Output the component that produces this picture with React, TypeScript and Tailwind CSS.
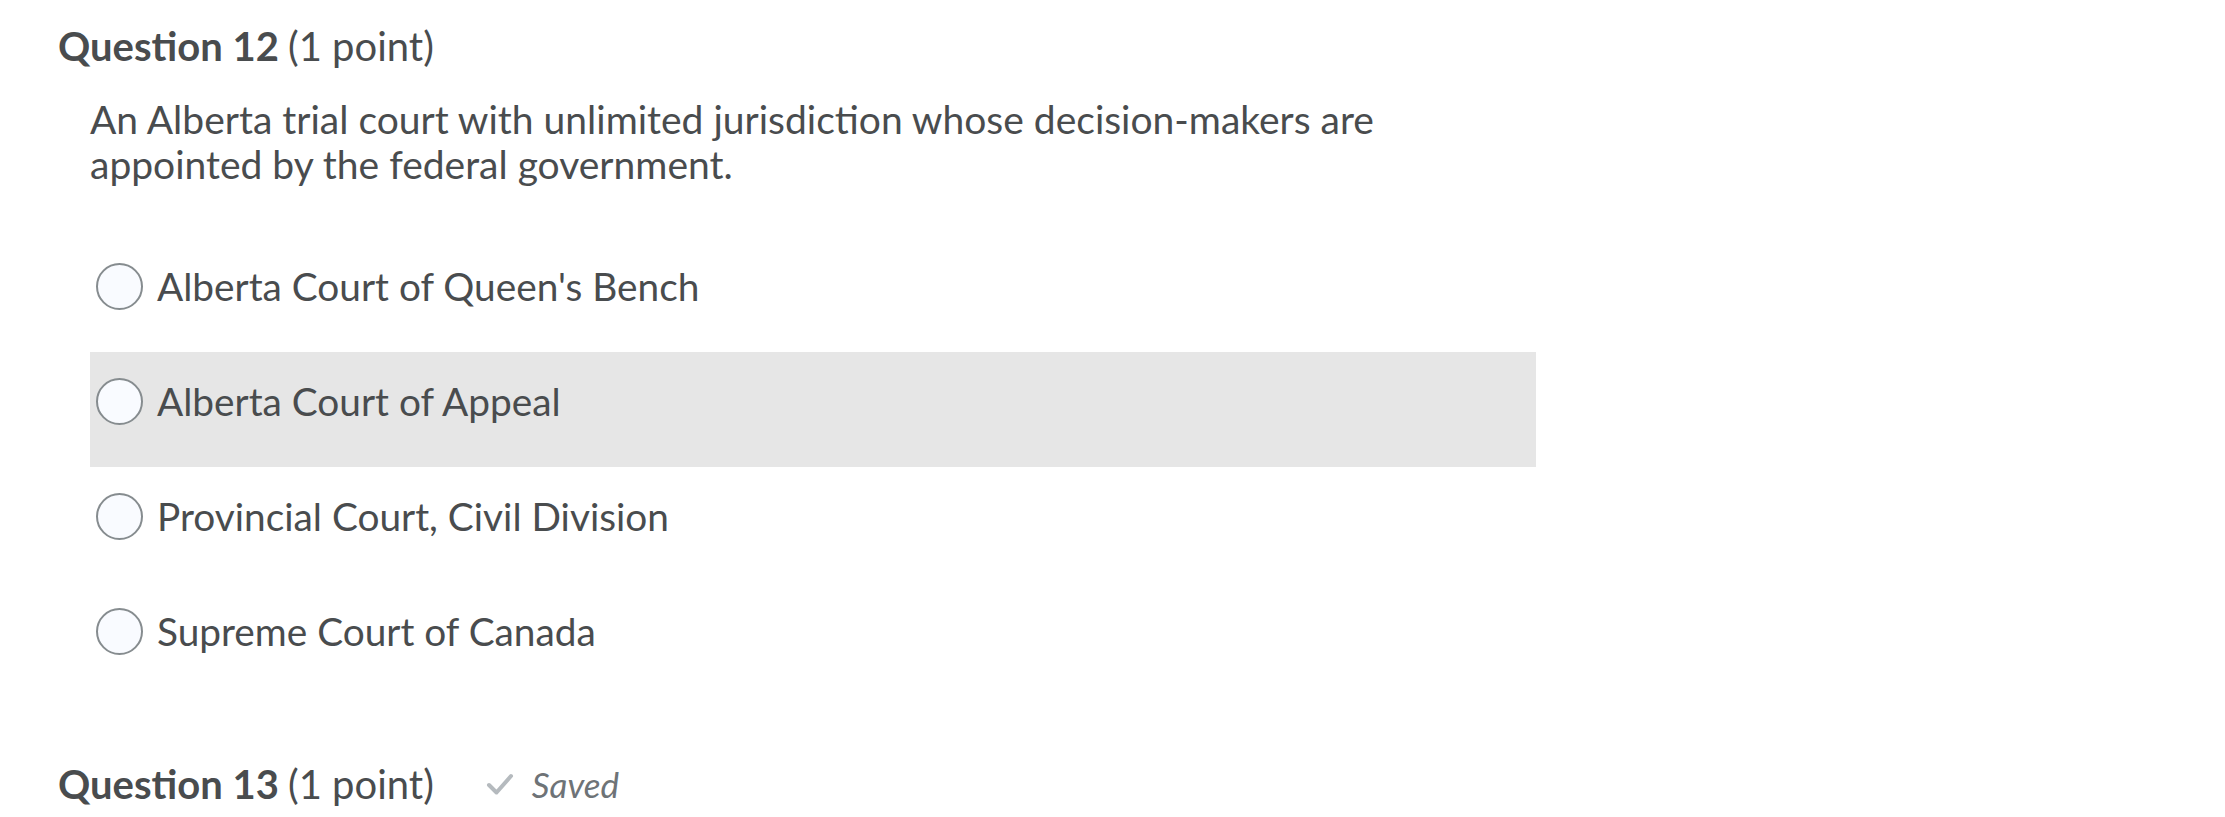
import React from 'react'

const options = [
  'Alberta Court of Queen\'s Bench',
  'Alberta Court of Appeal',
  'Provincial Court, Civil Division',
  'Supreme Court of Canada',
]

function Radio() {
  return (
    <span className="block w-[47px] h-[47px] shrink-0 rounded-full border-2 border-[#868c8f] bg-[#f9fbff]" />
  )
}

function QuestionHeader({ num, saved }: { num: number; saved?: boolean }) {
  return (
    <div className="flex items-center leading-[1.2] text-[40px]">
      <span className="font-bold">Question {num}</span>
      <span className="ml-[9px]">(1 point)</span>
      {saved && (
        <span className="flex items-center ml-[52px] text-[35px] italic text-[#6e7377]">
          <svg width="28" height="24" viewBox="0 0 28 24" fill="none" className="mr-[18px]">
            <path d="M3 13 L10.5 20.5 L25 4" stroke="#b5babe" strokeWidth="4" strokeLinecap="round" strokeLinejoin="round" />
          </svg>
          Saved
        </span>
      )}
    </div>
  )
}

export default function App() {
  return (
    <div className="w-[2225px] h-[817px] overflow-hidden bg-white text-[#494c4e] pl-[58px] pt-[22px]" style={{ fontFamily: 'Lato, "Open Sans", sans-serif' }}>
      <QuestionHeader num={12} />

      <div className="ml-[32px]">
        <p className="mt-[27px] w-[1300px] text-[39px] leading-[45px]">
          An Alberta trial court with unlimited jurisdiction whose decision-makers are appointed by the federal government.
        </p>

        <div className="mt-[50px] w-[1446px]">
          {options.map((opt, i) => (
            <label
              key={opt}
              className={`flex items-center gap-[14px] h-[115px] pl-[6px] pb-[16px] ${i === 1 ? 'bg-[#e6e6e6]' : ''}`}
            >
              <Radio />
              <span className="text-[38.8px] leading-[47px]">{opt}</span>
            </label>
          ))}
        </div>
      </div>

      <div className="mt-[63px]">
        <QuestionHeader num={13} saved />
      </div>
    </div>
  )
}
